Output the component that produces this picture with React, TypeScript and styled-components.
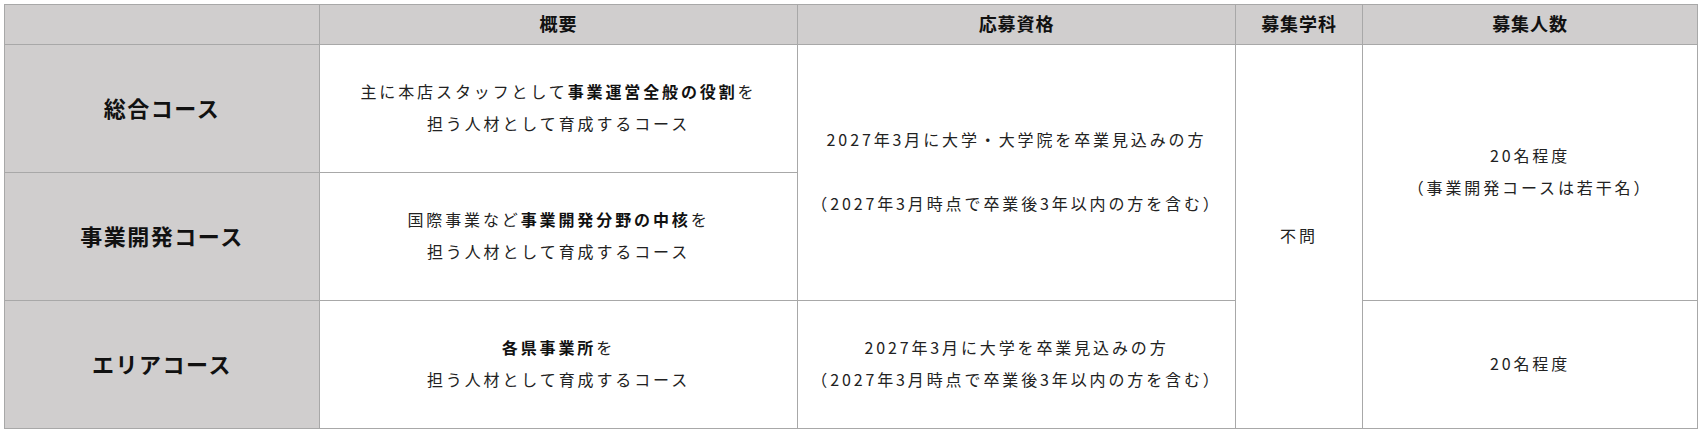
import styled, { createGlobalStyle } from "styled-components"

const GlobalStyle = createGlobalStyle`
    body {
        margin: 0;
        background: #ffffff;
        font-family: "Noto Sans CJK JP", "Noto Sans", sans-serif;
        color: #1a1a1a;
    }
`

const Wrapper = styled.div`
    padding: 4px;
`

const Table = styled.table`
    width: 1693px;
    border-collapse: collapse;
    table-layout: fixed;
    border: 1px solid #a8a8a8;
`

const Col = styled.col<{ $w: number }>`
    width: ${(p) => p.$w}px;
`

const HeadCell = styled.th`
    height: 36px;
    padding: 0 0 3px;
    background: #d0cece;
    border: 1px solid #a8a8a8;
    font-size: 18px;
    font-weight: 700;
    letter-spacing: 0.05em;
    text-align: center;
    vertical-align: middle;
    color: #111;
`

const RowHead = styled.th`
    height: 123px;
    padding: 0 0 4px;
    background: #d0cece;
    border: 1px solid #a8a8a8;
    font-size: 22px;
    font-weight: 700;
    letter-spacing: 1.5px;
    text-align: center;
    vertical-align: middle;
    color: #111;
`

const Cell = styled.td`
    padding: 0 0 4px;
    border: 1px solid #a8a8a8;
    background: #ffffff;
    font-size: 16px;
    line-height: 32px;
    letter-spacing: 0.18em;
    text-align: center;
    vertical-align: middle;
    color: #222;

    b {
        font-weight: 700;
        color: #111;
    }
`

const Line = styled.div`
    height: 32px;
    white-space: nowrap;
`

const widths = [315, 478, 438, 127, 335]

export default function App() {
    return (
        <>
            <GlobalStyle />
            <Wrapper>
                <Table>
                    <colgroup>
                        {widths.map((w, i) => (
                            <Col key={i} $w={w} />
                        ))}
                    </colgroup>
                    <thead>
                        <tr>
                            <HeadCell></HeadCell>
                            <HeadCell>概要</HeadCell>
                            <HeadCell>応募資格</HeadCell>
                            <HeadCell>募集学科</HeadCell>
                            <HeadCell>募集人数</HeadCell>
                        </tr>
                    </thead>
                    <tbody>
                        <tr>
                            <RowHead>総合コース</RowHead>
                            <Cell>
                                <Line>主に本店スタッフとして<b>事業運営全般の役割</b>を</Line>
                                <Line>担う人材として育成するコース</Line>
                            </Cell>
                            <Cell rowSpan={2}>
                                <Line>2027年3月に大学・大学院を卒業見込みの方</Line>
                                <Line />
                                <Line>（2027年3月時点で卒業後3年以内の方を含む）</Line>
                            </Cell>
                            <Cell rowSpan={3}>不問</Cell>
                            <Cell rowSpan={2}>
                                <Line>20名程度</Line>
                                <Line>（事業開発コースは若干名）</Line>
                            </Cell>
                        </tr>
                        <tr>
                            <RowHead>事業開発コース</RowHead>
                            <Cell>
                                <Line>国際事業など<b>事業開発分野の中核</b>を</Line>
                                <Line>担う人材として育成するコース</Line>
                            </Cell>
                        </tr>
                        <tr>
                            <RowHead>エリアコース</RowHead>
                            <Cell>
                                <Line><b>各県事業所</b>を</Line>
                                <Line>担う人材として育成するコース</Line>
                            </Cell>
                            <Cell>
                                <Line>2027年3月に大学を卒業見込みの方</Line>
                                <Line>（2027年3月時点で卒業後3年以内の方を含む）</Line>
                            </Cell>
                            <Cell>20名程度</Cell>
                        </tr>
                    </tbody>
                </Table>
            </Wrapper>
        </>
    )
}
